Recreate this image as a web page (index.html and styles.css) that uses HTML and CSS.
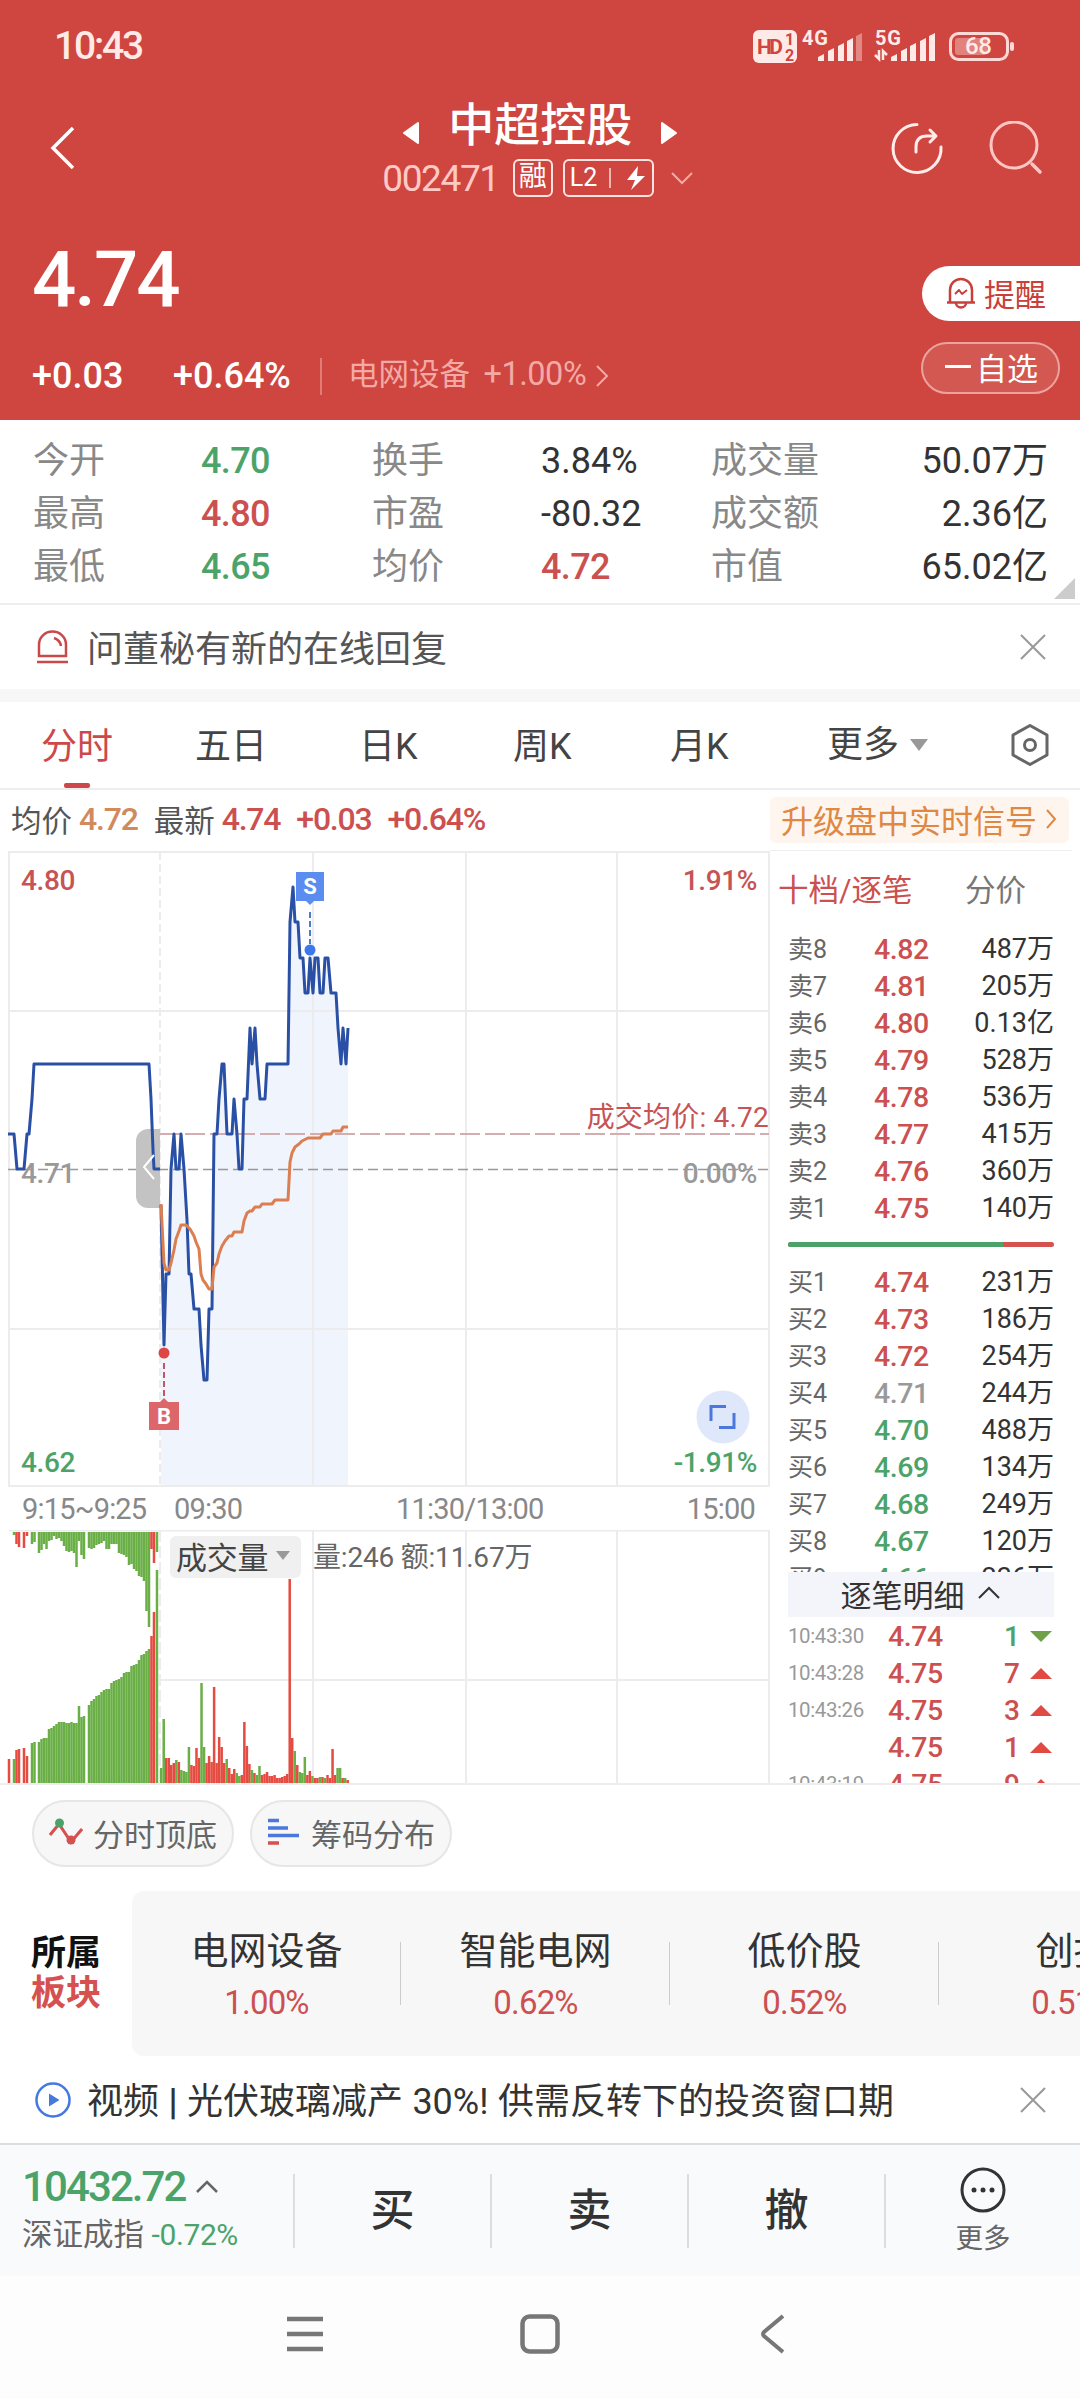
FILE: index.html
```html
<!DOCTYPE html>
<html lang="zh-CN">
<head>
    <meta charset="UTF-8">
    <meta name="viewport" content="width=device-width, initial-scale=1.0">
    <title>中超控股 002471</title>
    <link rel="stylesheet" href="styles.css">
</head>
<body>
    <div class="app">
        <header class="header">
            <div class="status-bar">
                <span class="clock">10:43</span>
                <svg class="status-icons" width="266" height="40" viewBox="0 0 266 40">
                    <rect x="3" y="4" width="44" height="33" rx="6" fill="#ffeae8"/>
                    <text x="7" y="28" class="hd-text" textLength="26">HD</text>
                    <text x="35" y="19" class="hd-small">1</text>
                    <text x="35" y="35" class="hd-small">2</text>
                    <text x="52" y="19" class="net-text" textLength="26">4G</text>
                    <g fill="#ffeae8">
                        <path d="M68 35v-4l6-3v7zM78 35V25l6-3v13zM88 35V20l6-3v18zM97 35V15l6-3v23z"/>
                        <path d="M106 35V10l6-3v28z" opacity="0.4"/>
                        <path d="M141 35v-4l6-3v7zM151 35V25l6-3v13zM160 35V20l6-3v18zM170 35V15l6-3v23zM179 35V10l6-3v28z"/>
                    </g>
                    <text x="125" y="19" class="net-text" textLength="26">5G</text>
                    <path d="M125 29l4 4V24M133 34v-9l4 4" fill="none" stroke="#ffeae8" stroke-width="2.5"/>
                    <rect x="200.500" y="7.500" width="57" height="26" rx="8" fill="none" stroke="#ffd9d6" stroke-width="3"/>
                    <rect x="205" y="12" width="32" height="17" rx="3" fill="#e2827d"/>
                    <rect x="260" y="16" width="4" height="9" rx="2" fill="#ffd9d6"/>
                    <text x="215" y="28" class="battery-text" textLength="27">68</text>
                </svg>
            </div>

            <div class="title-bar">
                <svg class="back" width="28" height="48" viewBox="0 0 28 48"><path d="M24 4L4 24l20 20" fill="none" stroke="#fff" stroke-width="3.500"/></svg>
                <div class="title-center">
                    <div class="stock-name">
                        <svg width="18" height="24" viewBox="0 0 18 24"><path d="M16 2v20L2 12z" fill="#fff" stroke="#fff" stroke-width="2" stroke-linejoin="round"/></svg>
                        <h1>中超控股</h1>
                        <svg width="18" height="24" viewBox="0 0 18 24"><path d="M2 2v20l14-10z" fill="#fff" stroke="#fff" stroke-width="2" stroke-linejoin="round"/></svg>
                    </div>
                    <div class="stock-code">
                        <span class="code">002471</span>
                        <span class="tag">融</span>
                        <span class="tag tag-l2">L2<i></i>
                            <svg width="20" height="26" viewBox="0 0 20 26"><path d="M12 1L1 15h8L5 25l14-14h-8z" fill="#fff"/></svg>
                        </span>
                        <svg width="22" height="14" viewBox="0 0 22 14"><path d="M1 2l10 10L21 2" fill="none" stroke="#f3aaa6" stroke-width="2"/></svg>
                    </div>
                </div>
                <div class="title-actions">
                    <svg width="54" height="54" viewBox="0 0 54 54" fill="none" stroke="#ffeceb" stroke-width="3" stroke-linecap="round" stroke-linejoin="round">
                        <path d="M27 3.500A24 24 0 1 0 51 26"/>
                        <path d="M26 31v-5q0-11 11-11h8M40 9l6 6-6 6"/>
                    </svg>
                    <svg width="54" height="54" viewBox="0 0 54 54" fill="none" stroke="#ffc7c4" stroke-width="3" stroke-linecap="round">
                        <circle cx="25" cy="24" r="23"/>
                        <path d="M43 43l8 8" stroke-width="3.500"/>
                    </svg>
                </div>
            </div>

            <div class="quote">
                <div class="price">4.74</div>
                <div class="change">
                    <span class="chg">+0.03</span>
                    <span class="pct">+0.64%</span>
                    <span class="industry">电网设备 <b>+1.00%</b></span>
                    <svg width="14" height="24" viewBox="0 0 14 24"><path d="M2 2l10 10L2 22" fill="none" stroke="#f3aaa6" stroke-width="2"/></svg>
                </div>
                <div class="quote-actions">
                    <div class="remind">
                        <svg width="30" height="32" viewBox="0 0 30 32" fill="none" stroke="#c9403b" stroke-width="2.500" stroke-linejoin="round">
                            <path d="M4 25V13a11 11 0 0 1 22 0v12M1 25.500h28M10 26a5 4.500 0 0 0 10 0"/>
                            <path d="M9 17l4-4 3 4 5-4" stroke-width="2"/>
                        </svg>
                        提醒
                    </div>
                    <div class="watch"><i></i>自选</div>
                </div>
            </div>
        </header>

        <section class="stats">
            <span class="label">今开</span><span class="green">4.70</span>
            <span class="label">换手</span><span class="plain">3.84%</span>
            <span class="label">成交量</span><span class="plain last">50.07万</span>
            <span class="label">最高</span><span class="red">4.80</span>
            <span class="label">市盈</span><span class="plain">-80.32</span>
            <span class="label">成交额</span><span class="plain last">2.36亿</span>
            <span class="label">最低</span><span class="green">4.65</span>
            <span class="label">均价</span><span class="red">4.72</span>
            <span class="label">市值</span><span class="plain last">65.02亿</span>
            <i class="corner"></i>
        </section>

        <section class="notice">
            <svg width="33" height="34" viewBox="0 0 33 34" fill="none" stroke="#c9484a" stroke-width="2.500">
                <path d="M3 26V14.500a13.500 13 0 0 1 27 0V26z"/>
                <path d="M18 8q6 2 7 8M1 32h31"/>
            </svg>
            <p>问董秘有新的在线回复</p>
            <svg class="close" width="26" height="26" viewBox="0 0 26 26"><path d="M1 1l24 24M25 1L1 25" stroke="#999" stroke-width="2"/></svg>
        </section>

        <nav class="tabs">
            <span class="tab active">分时</span>
            <span class="tab">五日</span>
            <span class="tab">日K</span>
            <span class="tab">周K</span>
            <span class="tab">月K</span>
            <span class="tab more">更多<i></i></span>
            <svg width="40" height="44" viewBox="0 0 40 44" fill="none" stroke="#666" stroke-width="3" stroke-linejoin="round">
                <path d="M20 2.500L37 12v20L20 41.500 3 32V12z"/>
                <circle cx="20" cy="22" r="5.500"/>
            </svg>
        </nav>

        <section class="info">
            <span>均价</span><span class="num orange">4.72</span>
            <span class="latest">最新</span><span class="num red">4.74</span>
            <span class="num red diff">+0.03</span><span class="num red diff">+0.64%</span>
            <div class="upgrade">升级盘中实时信号
                <svg width="12" height="22" viewBox="0 0 12 22"><path d="M2 2l8 9-8 9" fill="none" stroke="#df8844" stroke-width="2"/></svg>
            </div>
        </section>

        <main class="market">
            <div class="charts">
                <!-- price chart: one cent is 35.2px, 4.71 sits at y 319 -->
                <svg class="price-chart" width="770" height="638" viewBox="0 0 770 638">
                    <path class="area" d="M161 355L164 495 166 424H169L171 319 174 284 176 319H179L181 284 184 319 187 370 189 424H191L194 459H199L201 495 204 530H207L209 459H212L214 284H217L219 249 222 214H224L227 284H232L234 249 237 284 239 319H242L244 249H247L250 178 252 214 255 178 257 214 260 249H265L267 214H288L290 72 293 37 295 72H298L300 108H303L305 143H308L310 108 313 143 315 108H318L320 143H323L325 108H328L331 143H336L338 178 341 214 343 178 346 214 348 178V636H161z"/>
                    <g class="grid">
                        <rect x="9" y="2" width="760" height="634"/>
                        <path d="M9 161H769M9 479H769M313 2V636M466 2V636M617 2V636"/>
                        <path d="M160 2V636" stroke-dasharray="8 4"/>
                    </g>
                    <path d="M160 284H769" stroke="#d3adb0" stroke-width="2" stroke-dasharray="20 5"/>
                    <text x="21" y="40" class="axis red-fill">4.80</text>
                    <text x="21" y="333" class="axis gray-fill">4.71</text>
                    <text x="21" y="622" class="axis green-fill">4.62</text>
                    <text x="757" y="40" class="axis red-fill end">1.91%</text>
                    <text x="757" y="333" class="axis gray-fill end">0.00%</text>
                    <text x="757" y="622" class="axis green-fill end">-1.91%</text>
                    <path d="M8 319.500H769" stroke="#999" stroke-width="1.500" stroke-dasharray="10 5"/>
                    <text x="769" y="277" class="axis deal red-fill end">成交均价: 4.72</text>
                    <path class="tab-handle" d="M160 279H148a12 12 0 0 0-12 12V346a12 12 0 0 0 12 12H160z"/>
                    <path class="line" d="M8 284H14L17 319H24L27 284H29L32 249 34 214H149L151 249 153 300 154 319H160"/>
                    <path d="M154 305l-10 12 10 12" fill="none" stroke="#fff" stroke-width="2"/>
                    <path class="line" d="M161 355L164 495 166 424H169L171 319 174 284 176 319H179L181 284 184 319 187 370 189 424H191L194 459H199L201 495 204 530H207L209 459H212L214 284H217L219 249 222 214H224L227 284H232L234 249 237 284 239 319H242L244 249H247L250 178 252 214 255 178 257 214 260 249H265L267 214H288L290 72 293 37 295 72H298L300 108H303L305 143H308L310 108 313 143 315 108H318L320 143H323L325 108H328L331 143H336L338 178 341 214 343 178 346 214 348 178"/>
                    <path class="line avg" d="M161 354L164 413 166 420H169L171 413 174 400 176 389 179 381 181 375H186L190 379 194 386 196 392 199 399 201 424 203 430 206 434 209 439H212L214 417 217 413 219 404 222 396 225 391 229 386H232L234 382H242L244 371 247 363 250 361H252L255 357H260L262 354H272L275 350H288L290 312 292 303 295 297 299 294 302 291 308 288H320L323 284H331L333 281H341L343 277H348"/>
                    <g class="sell">
                        <path d="M296 22h28v29h-10l-4 4-4-4h-10z" fill="#5b8df0"/>
                        <text x="310" y="44" class="mark">S</text>
                        <path d="M310 62V94" stroke="#4a7fc8" stroke-width="2" stroke-dasharray="6 3"/>
                        <circle cx="310" cy="100" r="5.500" fill="#3a78ec"/>
                    </g>
                    <g class="buy">
                        <circle cx="164" cy="503" r="5.500" fill="#dc4646"/>
                        <path d="M164 513V547" stroke="#c0566a" stroke-width="2" stroke-dasharray="6 3"/>
                        <path d="M149 552h11l4-4 4 4h11v28h-30z" fill="#dc666a"/>
                        <text x="164" y="574" class="mark">B</text>
                    </g>
                    <circle cx="723" cy="567" r="26.500" fill="#dfe8fa"/>
                    <path d="M711 571V556.500H726M734 563V577.500H719" fill="none" stroke="#4a78dc" stroke-width="3"/>
                </svg>

                <div class="times">
                    <span>9:15~9:25</span><span>09:30</span><span>11:30/13:00</span><span>15:00</span>
                </div>

                <div class="volume">
                    <svg id="volumeChart" width="770" height="255" viewBox="0 0 770 255">
                        <path class="grid" d="M9 0.500H769M160 150H769M9 254H769M313 0V254M466 0V254M617 0V254M769 0V254"/>
                        <path class="grid" d="M160 0V254" stroke-dasharray="12 4"/>
                    </svg>
                    <div class="volume-title">
                        <span class="picker">成交量<i></i></span>
                        <span>量:246 额:11.67万</span>
                    </div>
                </div>
            </div>

            <aside class="book">
                <div class="book-tabs"><span class="red">十档/逐笔</span><span>分价</span></div>
                <div class="levels">
                    <p><span>卖8</span><b class="red">4.82</b><em>487万</em></p>
                    <p><span>卖7</span><b class="red">4.81</b><em>205万</em></p>
                    <p><span>卖6</span><b class="red">4.80</b><em>0.13亿</em></p>
                    <p><span>卖5</span><b class="red">4.79</b><em>528万</em></p>
                    <p><span>卖4</span><b class="red">4.78</b><em>536万</em></p>
                    <p><span>卖3</span><b class="red">4.77</b><em>415万</em></p>
                    <p><span>卖2</span><b class="red">4.76</b><em>360万</em></p>
                    <p><span>卖1</span><b class="red">4.75</b><em>140万</em></p>
                </div>
                <div class="ratio"><i></i></div>
                <div class="levels bids">
                    <p><span>买1</span><b class="red">4.74</b><em>231万</em></p>
                    <p><span>买2</span><b class="red">4.73</b><em>186万</em></p>
                    <p><span>买3</span><b class="red">4.72</b><em>254万</em></p>
                    <p><span>买4</span><b class="gray">4.71</b><em>244万</em></p>
                    <p><span>买5</span><b class="green">4.70</b><em>488万</em></p>
                    <p><span>买6</span><b class="green">4.69</b><em>134万</em></p>
                    <p><span>买7</span><b class="green">4.68</b><em>249万</em></p>
                    <p><span>买8</span><b class="green">4.67</b><em>120万</em></p>
                    <p><span>买9</span><b class="green">4.66</b><em>236万</em></p>
                </div>
                <div class="ticks-title">逐笔明细
                    <svg width="22" height="14" viewBox="0 0 22 14"><path d="M1 12L11 2l10 10" fill="none" stroke="#333" stroke-width="2"/></svg>
                </div>
                <div class="ticks">
                    <p><span>10:43:30</span><b>4.74</b><em class="green">1</em><i class="down"></i></p>
                    <p><span>10:43:28</span><b>4.75</b><em>7</em><i></i></p>
                    <p><span>10:43:26</span><b>4.75</b><em>3</em><i></i></p>
                    <p><span></span><b>4.75</b><em>1</em><i></i></p>
                    <p><span>10:43:19</span><b>4.75</b><em>9</em><i></i></p>
                </div>
            </aside>
        </main>

        <section class="chips">
            <span class="chip">
                <svg width="34" height="30" viewBox="0 0 34 30">
                    <path d="M1 18L10 7l12 18L33 12" fill="none" stroke="#d5504f" stroke-width="3"/>
                    <circle cx="10.500" cy="6" r="4.500" fill="#4ba369"/>
                    <circle cx="22" cy="23" r="4.500" fill="#d5504f"/>
                </svg>
                分时顶底
            </span>
            <span class="chip">
                <svg width="34" height="30" viewBox="0 0 34 30">
                    <path d="M1 3.500h11M1 11h20M1 18.500h31" stroke="#4a78dc" stroke-width="3.500"/>
                    <path d="M1 26h11" stroke="#d5504f" stroke-width="3.500"/>
                </svg>
                筹码分布
            </span>
        </section>

        <section class="sectors">
            <div class="sectors-title">所属<br><span>板块</span></div>
            <div class="sector-list">
                <div class="sector"><h3>电网设备</h3><p>1.00%</p></div>
                <div class="sector"><h3>智能电网</h3><p>0.62%</p></div>
                <div class="sector"><h3>低价股</h3><p>0.52%</p></div>
                <div class="sector"><h3>创投</h3><p>0.51%</p></div>
            </div>
        </section>

        <section class="notice video">
            <svg width="36" height="36" viewBox="0 0 36 36"><circle cx="18" cy="18" r="16.500" fill="none" stroke="#4479e0" stroke-width="2.500"/><path d="M14 11.500v13L24.500 18z" fill="#4479e0"/></svg>
            <p>视频 <b>|</b> 光伏玻璃减产 30%! 供需反转下的投资窗口期</p>
            <svg class="close" width="26" height="26" viewBox="0 0 26 26"><path d="M1 1l24 24M25 1L1 25" stroke="#999" stroke-width="2"/></svg>
        </section>

        <footer class="trade-bar">
            <div class="index">
                <div class="index-value">10432.72
                    <svg width="22" height="14" viewBox="0 0 22 14"><path d="M1 12L11 2l10 10" fill="none" stroke="#666" stroke-width="2.500"/></svg>
                </div>
                <div class="index-name">深证成指 <span>-0.72%</span></div>
            </div>
            <div class="trade">买</div>
            <div class="trade">卖</div>
            <div class="trade">撤</div>
            <div class="trade-more">
                <svg width="46" height="46" viewBox="0 0 46 46"><circle cx="23" cy="23" r="21" fill="none" stroke="#333" stroke-width="3"/><g fill="#333"><circle cx="14" cy="23" r="2.500"/><circle cx="23" cy="23" r="2.500"/><circle cx="32" cy="23" r="2.500"/></g></svg>
                更多
            </div>
        </footer>

        <div class="system-nav">
            <svg width="38" height="40" viewBox="0 0 38 40"><path d="M1 5h36M1 20h36M1 35h36" stroke="#777" stroke-width="4.500"/></svg>
            <svg width="40" height="40" viewBox="0 0 40 40"><rect x="2.500" y="2.500" width="35" height="35" rx="7" fill="none" stroke="#777" stroke-width="4.500"/></svg>
            <svg class="nav-back" width="26" height="40" viewBox="0 0 26 40"><path d="M23 2L4 18q-2 2 0 4l19 16" fill="none" stroke="#777" stroke-width="4"/></svg>
        </div>
    </div>
    <script src="script.js"></script>
</body>
</html>
```
FILE: styles.css
```css
* {
    box-sizing: border-box;
}

body {
    margin: 0;
    background: #fff;
    color: #333;
    font-family: Roboto, "Noto Sans CJK SC", sans-serif;
}

h1, h3, p {
    margin: 0;
    font-weight: 400;
}

svg {
    display: block;
    flex: none;
}

b, em, i {
    font-style: normal;
    font-weight: inherit;
}

.app {
    width: 1080px;
    height: 2400px;
    overflow: hidden;
    display: flex;
    flex-direction: column;
}

.red { color: #cc504f; }
.green { color: #4ba369; }
.gray { color: #999; }
.orange { color: #d08a5c; }

/* header */
.header {
    height: 420px;
    background: #cf453f;
    color: #fff;
}

.status-bar {
    height: 92px;
    padding: 0 64px 0 54px;
    display: flex;
    align-items: center;
    justify-content: space-between;
}

.clock {
    font-size: 39px;
    line-height: 40px;
    font-weight: 500;
    letter-spacing: -2.2px;
    color: #ffeae8;
}

.status-icons {
    margin-top: -1px;
}

.hd-text {
    font-size: 21px;
    font-weight: 700;
    fill: #cf453f;
}

.hd-small {
    font-size: 16px;
    font-weight: 700;
    fill: #cf453f;
}

.net-text {
    font-size: 20px;
    font-weight: 700;
    fill: #ffeae8;
}

.battery-text {
    font-size: 24px;
    font-weight: 500;
    fill: #ffeae8;
}

.title-bar {
    height: 118px;
    padding: 0 37px 0 49px;
    display: flex;
    justify-content: space-between;
}

.back {
    margin-top: 32px;
}

.title-center {
    padding-left: 108px;
}

.stock-name {
    height: 62px;
    margin-left: 20px;
    display: flex;
    align-items: center;
    gap: 28px;
}

.stock-name svg {
    margin-top: 19px;
}

.stock-name h1 {
    font-size: 46px;
    line-height: 62px;
    font-weight: 500;
    margin-top: 3px;
}

.stock-code {
    display: flex;
    align-items: center;
    height: 48px;
}

.code {
    font-size: 37px;
    letter-spacing: -1.4px;
    color: #ffc9c5;
    margin-right: 14px;
}

.tag {
    height: 38px;
    width: 40px;
    border: 2px solid #ffe3e1;
    border-radius: 6px;
    font-size: 28px;
    line-height: 32px;
    text-align: center;
    margin-right: 10px;
}

.tag-l2 {
    width: 91px;
    display: flex;
    align-items: center;
    font-size: 25px;
    padding-left: 5px;
    margin-right: 17px;
}

.tag-l2 i {
    width: 2px;
    height: 20px;
    margin: 0 15px 0 12px;
    background: #f3b5b1;
}

.title-actions {
    display: flex;
    gap: 45px;
    padding-top: 29px;
}

.quote {
    height: 210px;
    display: grid;
    grid-template-columns: 1fr 160px;
    grid-template-rows: 130px 80px;
}

.price {
    padding: 20px 0 0 32px;
    font-size: 78px;
    line-height: 100px;
    font-weight: 500;
    letter-spacing: -2px;
}

.quote-actions {
    grid-column: 2;
    grid-row: 1 / 3;
    padding-top: 56px;
    display: flex;
    flex-direction: column;
    gap: 21px;
}

.remind {
    height: 55px;
    margin-left: 2px;
    padding: 0 0 2px 24px;
    display: flex;
    align-items: center;
    gap: 8px;
    border-radius: 28px 0 0 28px;
    background: #fff;
    color: #c9403b;
    font-size: 31px;
}

.watch {
    height: 52px;
    width: 139px;
    margin-left: 1px;
    padding: 0 0 3px 22px;
    display: flex;
    align-items: center;
    gap: 5px;
    border: 2px solid #eba39f;
    border-radius: 26px;
    background: #d45852;
    font-size: 31px;
}

.watch i {
    width: 26px;
    height: 3px;
    background: #fff;
}

.change {
    grid-row: 2;
    grid-column: 1;
    display: flex;
    align-items: center;
    height: 72px;
    padding-left: 32px;
    font-size: 36px;
    font-weight: 500;
}

.chg {
    width: 141px;
}

.pct {
    width: 147px;
}

.industry {
    height: 37px;
    line-height: 33px;
    padding-left: 26px;
    margin-right: 9px;
    border-left: 2px solid #e07b76;
    color: #f3aaa6;
    font-size: 30.5px;
    font-weight: 400;
}

.industry b {
    font-size: 32.5px;
    letter-spacing: -0.5px;
    margin-left: 6px;
}

/* key figures */
.stats {
    position: relative;
    height: 185px;
    padding: 15px 32px 0 33px;
    display: grid;
    grid-template-columns: 168px 171px 169px 170px 140px 1fr;
    grid-auto-rows: 53px;
    align-items: center;
    border-bottom: 2px solid #eee;
    font-size: 36px;
    line-height: 53px;
    font-weight: 500;
}

.stats .label {
    color: #888;
    font-weight: 400;
}

.stats .plain {
    font-weight: 400;
}

.stats .green, .stats .red {
    letter-spacing: -0.6px;
}

.stats .last {
    text-align: right;
}

.corner {
    position: absolute;
    right: 5px;
    bottom: 4px;
    border-left: 21px solid transparent;
    border-bottom: 21px solid #ccc;
}

.notice {
    height: 84px;
    padding: 0 34px 0 36px;
    display: flex;
    align-items: center;
    font-size: 36px;
    color: #555;
}

.notice p {
    margin-left: 18px;
    padding-bottom: 3px;
}

.close {
    margin-left: auto;
}

/* chart tabs */
.tabs {
    height: 101px;
    padding-left: 41px;
    border-top: 13px solid #f7f7f7;
    border-bottom: 2px solid #eee;
    display: grid;
    grid-template-columns: 154px 164px 154px 157px 157px 183px 1fr;
    align-items: center;
    font-size: 36px;
    color: #444;
}

.tab {
    height: 86px;
    line-height: 90px;
}

.tab.active {
    position: relative;
    color: #cc484a;
}

.tab.active::after {
    content: "";
    position: absolute;
    left: 23px;
    bottom: 0;
    width: 26px;
    height: 5px;
    border-radius: 2px;
    background: #cc484a;
}

.more {
    display: flex;
    align-items: center;
    gap: 11px;
}

.more i {
    border: 9px solid transparent;
    border-top: 12px solid #999;
    border-bottom: 0;
}

.info {
    height: 60px;
    padding: 0 11px 2px;
    display: flex;
    align-items: center;
    font-size: 30.5px;
    color: #555;
}

.info .num {
    font-size: 32px;
    font-weight: 500;
    margin-left: 7px;
    letter-spacing: -1.2px;
}

.info .num.diff {
    margin-left: 16px;
}

.latest {
    margin-left: 16px;
}

.upgrade {
    height: 46px;
    margin: 2px 0 0 auto;
    padding: 0 12px 2px 11px;
    display: flex;
    align-items: center;
    gap: 8px;
    border-radius: 6px;
    background: #fdf5ee;
    color: #df8844;
    font-size: 32px;
}

/* charts */
.market {
    height: 935px;
    display: flex;
    border-bottom: 2px solid #eee;
    overflow: hidden;
}

.charts {
    width: 770px;
}

.grid, .grid path, .grid rect {
    fill: none;
    stroke: #ececee;
    stroke-width: 2;
}

.area {
    fill: #eff4fd;
}

.line {
    fill: none;
    stroke: #2a50a5;
    stroke-width: 3;
    stroke-linejoin: round;
}

.line.avg {
    stroke: #db7e50;
}

.axis {
    font-size: 28px;
    font-weight: 500;
    letter-spacing: -0.4px;
}

.deal {
    font-weight: 400;
    letter-spacing: 0.2px;
}

.end {
    text-anchor: end;
}

.red-fill { fill: #c65355; }
.gray-fill { fill: #999; }
.green-fill { fill: #4ba369; }

.tab-handle {
    fill: #c3c3c3;
}

.mark {
    font-size: 22px;
    font-weight: 700;
    text-anchor: middle;
    fill: #fff;
}

.times {
    height: 42px;
    padding: 0 15px 0 22px;
    display: grid;
    grid-template-columns: 152px 222px 1fr auto;
    align-items: center;
    font-size: 29px;
    letter-spacing: -0.8px;
    color: #888;
}

.volume {
    position: relative;
}

.up { fill: #e54b41; }
.fall { fill: #69af46; }

.volume-title {
    position: absolute;
    left: 170px;
    top: 5px;
    display: flex;
    align-items: center;
    gap: 12px;
    font-size: 28px;
    letter-spacing: -0.2px;
    color: #666;
}

.volume-title span {
    padding-bottom: 3px;
}

.picker {
    height: 42px;
    width: 131px;
    padding-left: 6px;
    display: flex;
    align-items: center;
    gap: 8px;
    border-radius: 6px;
    background: #f0f0f0;
    color: #444;
    font-size: 31px;
}

.picker i {
    border: 7px solid transparent;
    border-top: 9px solid #999;
    border-bottom: 0;
}

/* order book */
.book {
    width: 302px;
    padding: 0 18px;
    border-top: 1px solid #eee;
}

.book-tabs {
    height: 80px;
    display: flex;
    justify-content: space-between;
    align-items: center;
    margin-left: -10px;
    padding: 0 28px 6px 0;
    font-size: 30.5px;
    color: #777;
}

.levels p, .ticks p {
    height: 37px;
    line-height: 37px;
    display: flex;
}

.levels span {
    width: 86px;
    font-size: 25px;
    color: #666;
}

.levels b, .ticks b {
    font-size: 28.5px;
    font-weight: 500;
    letter-spacing: -0.4px;
}

.levels em {
    flex: 1;
    text-align: right;
    font-size: 27px;
}

.ratio {
    height: 5px;
    margin: 15px 0 17px;
    border-radius: 3px;
    background: #d5534f;
    overflow: hidden;
}

.ratio i {
    display: block;
    width: 81%;
    height: 5px;
    background: #4ba369;
}

.bids {
    height: 308px;
    overflow: hidden;
}

.ticks-title {
    height: 45px;
    padding: 0 2px 3px 0;
    display: flex;
    align-items: center;
    justify-content: center;
    gap: 13px;
    background: #f3f5fa;
    font-size: 31px;
}

.ticks {
    padding-top: 1px;
}

.ticks p {
    align-items: center;
    color: #cc504f;
}

.ticks span {
    width: 100px;
    font-size: 20.5px;
    letter-spacing: -0.4px;
    color: #999;
}

.ticks em {
    flex: 1;
    text-align: right;
    font-size: 28px;
    font-weight: 500;
}

.ticks i {
    margin: 0 2px 0 10px;
    border: 11px solid transparent;
    border-bottom: 11px solid #e04a42;
    border-top: 0;
}

.ticks .down {
    border-top: 11px solid #6f9f48;
    border-bottom: 0;
}

/* chips */
.chips {
    height: 106px;
    padding: 15px 32px 0;
    display: flex;
    gap: 16px;
}

.chip {
    height: 67px;
    width: 202px;
    padding-bottom: 3px;
    display: flex;
    align-items: center;
    justify-content: center;
    gap: 10px;
    border: 2px solid #e6e6e6;
    border-radius: 34px;
    background: #f7f7f7;
    color: #666;
    font-size: 31px;
}

/* sectors */
.sectors {
    height: 165px;
    display: flex;
}

.sectors-title {
    width: 132px;
    padding: 43px 0 0 31px;
    font-size: 35px;
    line-height: 40px;
    font-weight: 700;
    color: #111;
}

.sectors-title span {
    color: #d5504f;
}

.sector-list {
    width: 948px;
    display: flex;
    overflow: hidden;
    border-radius: 12px 0 0 12px;
    background: #f7f7f7;
}

.sector {
    position: relative;
    flex: none;
    width: 269px;
    padding-top: 33px;
    text-align: center;
}

.sector + .sector::before {
    content: "";
    position: absolute;
    left: -1px;
    top: 51px;
    width: 1px;
    height: 63px;
    background: #ccc;
}

.sector h3 {
    font-size: 38px;
    line-height: 54px;
}

.sector p {
    font-size: 33px;
    line-height: 50px;
    letter-spacing: -0.8px;
    color: #cc504f;
}

.video {
    height: 87px;
    padding-left: 35px;
    color: #333;
}

.video p {
    margin-left: 16px;
    word-spacing: 0.5px;
}

.video b {
    font-weight: 700;
}

/* bottom bar */
.trade-bar {
    height: 133px;
    display: flex;
    align-items: center;
    border-top: 2px solid #ddd;
    background: #f9fafc;
}

.index {
    width: 293px;
    padding: 0 0 2px 22px;
}

.index-value {
    display: flex;
    align-items: center;
    gap: 10px;
    font-size: 42px;
    line-height: 50px;
    font-weight: 500;
    letter-spacing: -1.9px;
    color: #4ba369;
}

.index-name {
    font-size: 30.5px;
    line-height: 46px;
    color: #666;
}

.index-name span {
    font-size: 30px;
    letter-spacing: -0.4px;
    color: #4ba369;
}

.trade {
    width: 197px;
    height: 74px;
    line-height: 75px;
    border-left: 2px solid #ddd;
    text-align: center;
    font-size: 44px;
    font-weight: 500;
}

.trade-more {
    flex: 1;
    height: 74px;
    border-left: 2px solid #ddd;
    display: flex;
    flex-direction: column;
    align-items: center;
    justify-content: center;
    padding-top: 4px;
    font-size: 27.5px;
    line-height: 38px;
    color: #666;
    gap: 7px;
}

.system-nav {
    height: 123px;
    padding: 38px 0 0 286px;
    display: flex;
    gap: 196px;
    background: #fdfdfd;
}

.nav-back {
    margin-left: 4px;
}
```
FILE: script.js
```javascript
const chart = document.getElementById("volumeChart");
const BOTTOM = 253;

// [x, height, "r" | "g"]
const auctionLow = [
    [9, 24, "r"], [14, 24, "g"], [16.500, 33, "r"], [19, 34, "r"], [24, 35, "r"], [27, 27, "r"],
    [32, 40, "g"], [34.500, 41, "g"], [39, 41, "g"], [41.500, 44, "g"], [44, 45, "g"], [46.500, 45, "g"],
    [49, 54, "g"], [51.500, 55, "g"], [54, 57, "g"], [56.500, 59, "g"], [59, 61, "g"], [61.500, 61, "g"],
    [64, 61, "g"], [66.500, 60, "g"], [69, 60, "g"], [71.500, 61, "g"], [74, 60, "g"], [76.500, 60, "g"],
    [79, 77, "g"], [81.500, 66, "g"], [84, 67, "g"], [89, 78, "g"], [91.500, 82, "g"], [94, 84, "g"],
    [96.500, 87, "g"], [99, 88, "g"], [101.500, 91, "g"], [104, 93, "g"], [106.500, 94, "g"], [109, 94, "g"],
    [111.500, 100, "g"], [114, 102, "g"], [116.500, 103, "g"], [119, 104, "g"], [121.500, 106, "g"],
    [124, 110, "g"], [126.500, 111, "g"], [129, 111, "g"], [131.500, 117, "g"], [134, 118, "g"],
    [136.500, 119, "g"], [139, 123, "g"], [141.500, 128, "g"], [144, 129, "g"], [146.500, 132, "g"],
    [149, 134, "g"], [151.500, 147, "r"], [154, 171, "r"], [157, 213, "g"]
];

const auctionHigh = [
    [14, 3, "g"], [16.500, 12, "r"], [19, 15, "r"], [24, 16, "r"], [27, 4, "r"], [32, 12, "g"], [34.500, 10, "g"],
    [39, 21, "g"], [41.500, 18, "g"], [44, 12, "g"], [46.500, 17, "g"], [49, 9, "g"], [51.500, 8, "g"],
    [54, 4, "g"], [56.500, 7, "g"], [59, 6, "g"], [61.500, 9, "g"], [64, 14, "g"], [66.500, 19, "g"],
    [69, 20, "g"], [71.500, 19, "g"], [74, 21, "g"], [76.500, 35, "g"], [79, 9, "g"], [81.500, 23, "g"],
    [84, 27, "g"], [89, 16, "g"], [91.500, 17, "g"], [94, 16, "g"], [96.500, 13, "g"], [99, 12, "g"],
    [101.500, 11, "g"], [104, 9, "g"], [106.500, 17, "g"], [109, 17, "g"], [111.500, 12, "g"], [114, 12, "g"],
    [116.500, 12, "g"], [119, 21, "g"], [121.500, 22, "g"], [124, 23, "g"], [126.500, 25, "g"], [129, 33, "g"],
    [131.500, 32, "g"], [134, 37, "g"], [136.500, 39, "g"], [139, 44, "g"], [141.500, 45, "g"], [144, 49, "g"],
    [146.500, 79, "g"], [149, 95, "g"], [151.500, 17, "r"], [154, 31, "r"], [157, 20, "g"]
];

// one bar per minute from 09:30
const minutes = "g15 g64 r25 r25 r18 r20 g23 r21 g13 g12 g11 g36 r18 r17 r35 r25 g100 g36 r20 r27 r21 r96 r20 r46 " +
    "r36 r20 g24 r15 r9 r14 g10 g7 r8 r61 r37 r19 g13 r10 g8 g17 r8 r9 r11 r7 r7 r8 r5 r5 r6 r7 r9 r204 r45 g32 " +
    "r18 g11 g10 g26 r8 r12 g7 r5 r5 g6 r6 g5 r8 r5 r34 r8 g15 g15 r5 g5 r3";

function bar(x, y, height, color) {
    const rect = document.createElementNS("http://www.w3.org/2000/svg", "rect");
    rect.setAttribute("x", x - 1.25);
    rect.setAttribute("y", y);
    rect.setAttribute("width", 2.5);
    rect.setAttribute("height", height);
    rect.setAttribute("class", color === "r" ? "up" : "fall");
    chart.appendChild(rect);
}

auctionLow.forEach(([x, h, c]) => bar(x, BOTTOM - h, h, c));
auctionHigh.forEach(([x, h, c]) => bar(x, 2, h, c));
minutes.split(" ").forEach((m, i) => {
    const h = Number(m.slice(1));
    bar(161.2 + i * 2.52, BOTTOM - h, h, m[0]);
});
```
